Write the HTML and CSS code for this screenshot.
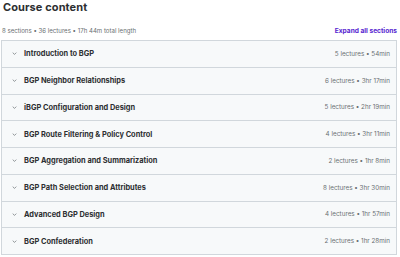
FILE: index.html
```html
<!DOCTYPE html>
<html lang="en">
<head>
    <meta charset="UTF-8">
    <meta name="viewport" content="width=device-width, initial-scale=1.0">
    <title>Course content</title>
    <link rel="stylesheet" href="styles.css">
</head>
<body>
    <div class="curriculum">
        <h2 class="heading">Course content</h2>
        <div class="meta">
            <span class="meta-text">8 sections • 36 lectures • 17h 44m total length</span>
            <button class="expand">Expand all sections</button>
        </div>
        <div class="sections">
            <div class="section">
                <div class="section-left">
                    <svg class="chevron" viewBox="0 0 8 5"><path d="M1 1l3 3 3-3"/></svg>
                    <span class="section-title">Introduction to BGP</span>
                </div>
                <span class="section-info">5 lectures • 54min</span>
            </div>
            <div class="section">
                <div class="section-left">
                    <svg class="chevron" viewBox="0 0 8 5"><path d="M1 1l3 3 3-3"/></svg>
                    <span class="section-title">BGP Neighbor Relationships</span>
                </div>
                <span class="section-info">6 lectures • 3hr 17min</span>
            </div>
            <div class="section">
                <div class="section-left">
                    <svg class="chevron" viewBox="0 0 8 5"><path d="M1 1l3 3 3-3"/></svg>
                    <span class="section-title">iBGP Configuration and Design</span>
                </div>
                <span class="section-info">5 lectures • 2hr 19min</span>
            </div>
            <div class="section">
                <div class="section-left">
                    <svg class="chevron" viewBox="0 0 8 5"><path d="M1 1l3 3 3-3"/></svg>
                    <span class="section-title">BGP Route Filtering &amp; Policy Control</span>
                </div>
                <span class="section-info">4 lectures • 3hr 11min</span>
            </div>
            <div class="section">
                <div class="section-left">
                    <svg class="chevron" viewBox="0 0 8 5"><path d="M1 1l3 3 3-3"/></svg>
                    <span class="section-title">BGP Aggregation and Summarization</span>
                </div>
                <span class="section-info">2 lectures • 1hr 8min</span>
            </div>
            <div class="section">
                <div class="section-left">
                    <svg class="chevron" viewBox="0 0 8 5"><path d="M1 1l3 3 3-3"/></svg>
                    <span class="section-title">BGP Path Selection and Attributes</span>
                </div>
                <span class="section-info">8 lectures • 3hr 30min</span>
            </div>
            <div class="section">
                <div class="section-left">
                    <svg class="chevron" viewBox="0 0 8 5"><path d="M1 1l3 3 3-3"/></svg>
                    <span class="section-title">Advanced BGP Design</span>
                </div>
                <span class="section-info">4 lectures • 1hr 57min</span>
            </div>
            <div class="section">
                <div class="section-left">
                    <svg class="chevron" viewBox="0 0 8 5"><path d="M1 1l3 3 3-3"/></svg>
                    <span class="section-title">BGP Confederation</span>
                </div>
                <span class="section-info">2 lectures • 1hr 28min</span>
            </div>
        </div>
    </div>
</body>
</html>
```

FILE: styles.css
```css
body, html {
    margin: 0;
    background-color: #ffffff;
    font-family: Inter, "Noto Sans", sans-serif;
    color: #2d2f31;
}
.curriculum {
    padding: 0 3px 0 1px;
}
.heading {
    margin: 0 0 0 2px;
    font-size: 11px;
    line-height: 15px;
    font-weight: 700;
    letter-spacing: 0.1px;
}
.meta {
    display: flex;
    justify-content: space-between;
    align-items: center;
    margin: 10.5px 0 4.5px 1px;
    height: 10px;
}
.meta-text {
    font-size: 6.1px;
    color: #6a6f73;
}
.expand {
    background: none;
    border: none;
    padding: 0;
    font-family: inherit;
    font-size: 6.6px;
    font-weight: 700;
    color: #5624d0;
    cursor: pointer;
}
.sections {
    border: 1px solid #d1d7dc;
    border-bottom: none;
}
.section {
    display: flex;
    justify-content: space-between;
    align-items: center;
    height: 25.75px;
    padding: 0 6px 0 10px;
    background-color: #f7f9fa;
    border-bottom: 1px solid #d1d7dc;
}
.section-left {
    display: flex;
    align-items: center;
    gap: 7px;
}
.chevron {
    width: 5px;
    height: 3px;
    fill: none;
    stroke: #6a6f73;
    stroke-width: 1.2;
}
.section-title {
    font-size: 7.4px;
    font-weight: 700;
    color: #2d2f31;
}
.section-info {
    font-size: 6.3px;
    color: #6a6f73;
}
```
